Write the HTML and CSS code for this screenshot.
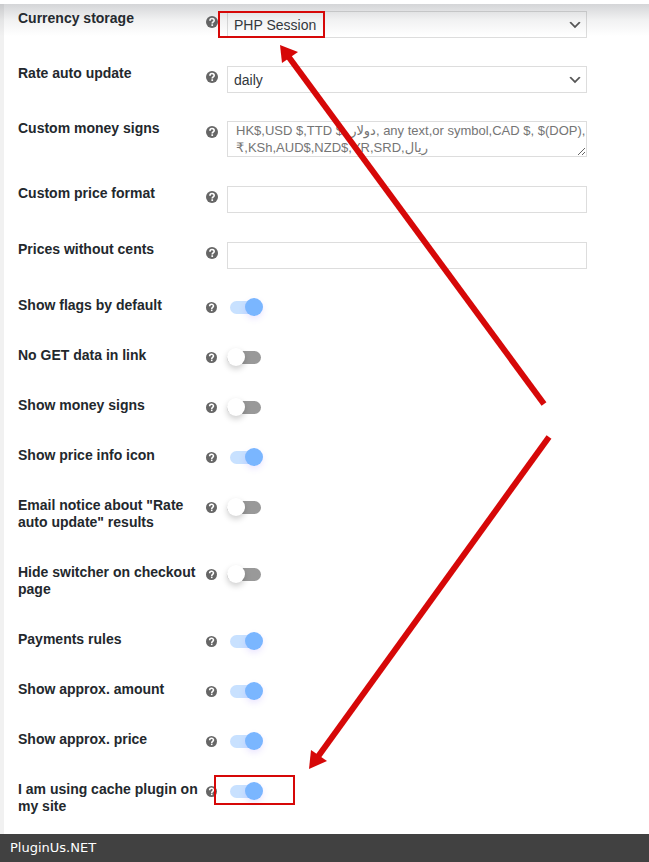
FILE: index.html
```
<!DOCTYPE html>
<html lang="en">
<head>
    <meta charset="UTF-8">
    <meta name="viewport" content="width=device-width, initial-scale=1.0">
    <title>Currency options</title>
    <link rel="stylesheet" href="styles.css">
</head>
<body>
    <svg class="sprite" aria-hidden="true">
        <symbol id="help" viewBox="0 0 20 20">
            <circle cx="10" cy="10" r="10" fill="#666"/>
            <path d="M6.6 7.8c0-4.8 7-4.6 7-.5 0 2.5-3.2 2.5-3.2 5.2" fill="none" stroke="#fff" stroke-width="2.8"/>
            <rect x="9" y="13.8" width="2.8" height="2.8" fill="#fff"/>
        </symbol>
        <symbol id="chevron" viewBox="0 0 20 20">
            <path d="M5 6l5 5 5-5 2 1-7 7-7-7 2-1z" fill="#555"/>
        </symbol>
    </svg>

    <main class="page">
        <form class="settings">
            <div class="row row-field">
                <label for="storage">Currency storage</label>
                <svg class="help"><use href="#help"/></svg>
                <div class="select-wrap">
                    <select id="storage" class="field"><option>PHP Session</option><option>Transient</option></select>
                    <svg class="chevron"><use href="#chevron"/></svg>
                </div>
            </div>
            <div class="row row-field">
                <label for="rate">Rate auto update</label>
                <svg class="help"><use href="#help"/></svg>
                <div class="select-wrap">
                    <select id="rate" class="field"><option>daily</option><option>weekly</option></select>
                    <svg class="chevron"><use href="#chevron"/></svg>
                </div>
            </div>
            <div class="row row-field">
                <label for="signs">Custom money signs</label>
                <svg class="help"><use href="#help"/></svg>
                <textarea id="signs" class="field" placeholder="HK$,USD $,TTD $, دولار, any text,or symbol,CAD $, $(DOP),&#10;₹,KSh,AUD$,NZD$,YR,SRD,ريال"></textarea>
            </div>
            <div class="row row-field">
                <label for="format">Custom price format</label>
                <svg class="help"><use href="#help"/></svg>
                <input type="text" id="format" class="field">
            </div>
            <div class="row row-field">
                <label for="cents">Prices without cents</label>
                <svg class="help"><use href="#help"/></svg>
                <input type="text" id="cents" class="field">
            </div>
            <div class="row">
                <label for="flags">Show flags by default</label>
                <svg class="help"><use href="#help"/></svg>
                <input type="checkbox" id="flags" class="switch" checked>
            </div>
            <div class="row">
                <label for="noget">No GET data in link</label>
                <svg class="help"><use href="#help"/></svg>
                <input type="checkbox" id="noget" class="switch">
            </div>
            <div class="row">
                <label for="money">Show money signs</label>
                <svg class="help"><use href="#help"/></svg>
                <input type="checkbox" id="money" class="switch">
            </div>
            <div class="row">
                <label for="info">Show price info icon</label>
                <svg class="help"><use href="#help"/></svg>
                <input type="checkbox" id="info" class="switch" checked>
            </div>
            <div class="row">
                <label for="email">Email notice about "Rate auto update" results</label>
                <svg class="help"><use href="#help"/></svg>
                <input type="checkbox" id="email" class="switch">
            </div>
            <div class="row">
                <label for="checkout">Hide switcher on checkout page</label>
                <svg class="help"><use href="#help"/></svg>
                <input type="checkbox" id="checkout" class="switch">
            </div>
            <div class="row">
                <label for="payments">Payments rules</label>
                <svg class="help"><use href="#help"/></svg>
                <input type="checkbox" id="payments" class="switch" checked>
            </div>
            <div class="row">
                <label for="amount">Show approx. amount</label>
                <svg class="help"><use href="#help"/></svg>
                <input type="checkbox" id="amount" class="switch" checked>
            </div>
            <div class="row">
                <label for="price">Show approx. price</label>
                <svg class="help"><use href="#help"/></svg>
                <input type="checkbox" id="price" class="switch" checked>
            </div>
            <div class="row">
                <label for="cache">I am using cache plugin on my site</label>
                <svg class="help"><use href="#help"/></svg>
                <input type="checkbox" id="cache" class="switch" checked>
            </div>
        </form>

        <!-- red marks over the form -->
        <svg class="marks" width="649" height="834" aria-hidden="true">
            <g fill="none" stroke="#d60808" stroke-width="2">
                <rect x="219" y="12" width="105" height="25"/>
                <rect x="215" y="776" width="79" height="28"/>
            </g>
            <g stroke="#d60808" stroke-width="6">
                <path d="M544 404L288 56"/>
                <path d="M549 437L317 758"/>
            </g>
            <path d="M280 45L298 52L282 63z" fill="#d60808"/>
            <path d="M309 769L311 750L327 761z" fill="#d60808"/>
        </svg>
    </main>

    <footer class="footer">PluginUs.NET</footer>
</body>
</html>
```
FILE: styles.css
```
* {
    box-sizing: border-box;
}
body {
    margin: 0;
    background: #fff;
    color: #23282d;
    font-family: "Liberation Sans", "DejaVu Sans", Arial, sans-serif;
    font-size: 14px;
    line-height: 17px;
}
.sprite {
    display: none;
}
.page {
    position: relative;
    border-left: 4px solid #f1f1f1;
}
/* shadow under the header */
.page::before {
    content: "";
    position: absolute;
    top: 0;
    left: -4px;
    right: 0;
    height: 32px;
    border-top: 4px solid #fff;
    background: linear-gradient(rgba(60, 65, 75, 0.22), rgba(60, 65, 75, 0.07) 50%, rgba(60, 65, 75, 0)) padding-box;
    pointer-events: none;
    z-index: 1;
}
.settings {
    padding: 0 62px 0 14px;
}
.row {
    display: grid;
    grid-template-columns: 180px 13px minmax(0, 360px);
    column-gap: 8px;
    align-items: start;
    padding: 10px 0 23px;
}
.row:last-child {
    padding-bottom: 19px;
}
.row-field {
    padding-bottom: 17px;
}
.row label {
    font-weight: bold;
}
.help {
    width: 11px;
    height: 11px;
    margin-top: 5px;
}
.row-field .help {
    width: 12px;
    height: 12px;
    margin-top: 6px;
}
.field {
    display: block;
    width: 100%;
    height: 27px;
    margin: 1px 0;
    padding: 0 6px;
    border: 1px solid #ddd;
    border-radius: 0;
    background: #fff;
    color: #32373c;
    font: inherit;
}
textarea.field {
    height: 36px;
    padding: 0 0 0 8px;
    font-size: 13px;
    line-height: 17px;
    overflow: hidden;
    resize: both;
}
.field::placeholder {
    color: #757575;
}
.select-wrap {
    position: relative;
}
select.field {
    margin-bottom: 0;
    padding-top: 2px;
    appearance: none;
}
.chevron {
    position: absolute;
    top: 7px;
    right: 4px;
    width: 16px;
    height: 16px;
    pointer-events: none;
}
.switch {
    appearance: none;
    position: relative;
    width: 34px;
    height: 13px;
    margin: 4px 0 0;
    border-radius: 7px;
    background: #999;
}
.switch::before {
    content: "";
    position: absolute;
    top: -3px;
    left: 0;
    width: 18px;
    height: 18px;
    border-radius: 50%;
    background: #fff;
    box-shadow: 0 3px 6px rgba(0, 0, 0, 0.2);
}
.switch:checked {
    width: 32px;
    margin-left: 3px;
    background: #c8e1ff;
}
.switch:checked::before {
    left: 15px;
    background: #7ab6ff;
    box-shadow: 0 3px 6px rgba(120, 90, 255, 0.15);
}
.marks {
    position: absolute;
    top: 0;
    left: -4px;
    z-index: 2;
    pointer-events: none;
}
.footer {
    height: 28px;
    padding: 0 10px;
    background: #414141;
    color: #fff;
    font-family: "DejaVu Sans", Verdana, sans-serif;
    font-size: 13px;
    line-height: 28px;
}
```
